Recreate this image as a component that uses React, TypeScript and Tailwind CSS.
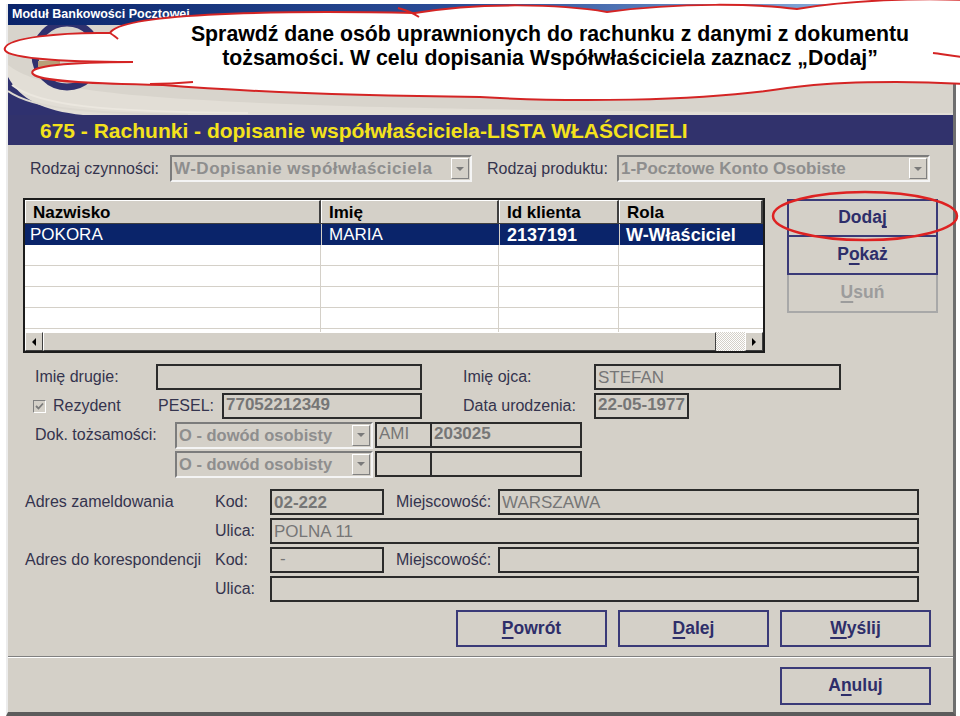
import React from "react";

const LBL = "text-[16px] text-[#34344e] whitespace-nowrap leading-none";

function Field({ className = "", children }: { className?: string; children?: React.ReactNode }) {
  return (
    <div
      className={`h-[26px] border-2 border-[#2b2b2b] bg-[#d4d0c8] pl-[2px] flex items-center text-[17px] leading-none text-[#767676] whitespace-nowrap overflow-hidden ${className}`}
    >
      {children}
    </div>
  );
}

function Select({ className = "", text, size = "text-[17px]" }: { className?: string; text: string; size?: string }) {
  return (
    <div
      className={`h-[27px] flex border-2 border-t-[#7c7c7c] border-l-[#7c7c7c] border-b-[#f4f4f4] border-r-[#f4f4f4] bg-[#d4d0c8] ${className}`}
    >
      <div className={`flex-1 flex items-center pl-[2px] font-bold text-[#8e8e8e] leading-none whitespace-nowrap overflow-hidden ${size}`}>
        {text}
      </div>
      <div className="w-[18px] my-[1px] mr-[1px] flex items-center justify-center border border-t-white border-l-white border-b-[#808080] border-r-[#808080] bg-[#d4d0c8]">
        <div className="w-0 h-0 border-x-[4px] border-x-transparent border-t-[4px] border-t-[#7a7a7a]" />
      </div>
    </div>
  );
}

function Btn({ children, className = "", disabled = false }: { children: React.ReactNode; className?: string; disabled?: boolean }) {
  return (
    <div
      className={`w-[151px] flex items-center justify-center font-bold text-[17.5px] leading-none ${
        disabled ? "border-2 border-[#a8a8a8] text-[#9c9c9c]" : "border-2 border-[#3a3a78] text-[#2e2e6a]"
      } ${className}`}
    >
      {children}
    </div>
  );
}

const U = ({ c }: { c: string }) => <span className="underline underline-offset-[3px] decoration-[1.5px]">{c}</span>;

function Table() {
  const cols = ["w-[296px]", "w-[178px]", "w-[120px]", "w-[144px]"];
  return (
    <div className="w-[742px] h-[155px] border-2 border-[#1c1c1c] bg-white flex flex-col">
      <div className="h-[24px] flex border-b border-b-[#404040]">
        {["Nazwisko", "Imię", "Id klienta", "Rola"].map((h, i) => (
          <div
            key={h}
            className={`${cols[i]} flex items-center pl-[7px] bg-[#d4d0c8] border-t border-l border-t-white border-l-white border-r-2 border-r-[#404040] font-bold text-[17px] leading-none text-black`}
          >
            {h}
          </div>
        ))}
      </div>
      <div className="h-[21px] flex bg-[#0a246a] text-white leading-none">
        <div className="w-[296px] flex items-center pl-[5px] text-[17px]">POKORA</div>
        <div className="w-[178px] flex items-center pl-[7px] text-[17px] border-l border-l-[#d4d0c8]">MARIA</div>
        <div className="w-[120px] flex items-center pl-[7px] text-[18px] font-bold border-l border-l-[#d4d0c8]">2137191</div>
        <div className="w-[144px] flex items-center pl-[6px] text-[18px] font-bold border-l border-l-[#d4d0c8]">W-Właściciel</div>
      </div>
      {[0, 1, 2, 3].map((r) => (
        <div key={r} className="h-[21px] flex border-b border-b-[#d4d0c8]">
          {cols.map((c, i) => (
            <div key={i} className={`${c} ${i < 3 ? "border-r border-r-[#d4d0c8]" : ""}`} />
          ))}
        </div>
      ))}
      <div className="flex-1 flex">
        {cols.map((c, i) => (
          <div key={i} className={`${c} ${i < 3 ? "border-r border-r-[#d4d0c8]" : ""}`} />
        ))}
      </div>
      <div className="h-[19px] flex bg-[#d4d0c8]">
        <div className="w-[18px] flex items-center justify-center border border-t-white border-l-white border-b-[#404040] border-r-[#404040]">
          <div className="w-0 h-0 border-y-[4px] border-y-transparent border-r-[4px] border-r-black" />
        </div>
        <div className="w-[673px] border border-t-white border-l-white border-b-[#404040] border-r-[#404040]" />
        <div className="w-[29px] bg-[repeating-conic-gradient(#ffffff_0_25%,#d4d0c8_0_50%)] bg-[length:2px_2px]" />
        <div className="w-[18px] flex items-center justify-center border border-t-white border-l-white border-b-[#404040] border-r-[#404040]">
          <div className="w-0 h-0 border-y-[4px] border-y-transparent border-l-[4px] border-l-black" />
        </div>
      </div>
    </div>
  );
}

export default function App() {
  return (
    <div className="relative w-[960px] h-[716px] overflow-hidden bg-white font-['Liberation_Sans',Arial,sans-serif]">
      <div className="ml-[6px] mt-[4px] w-[950px] h-[712px] flex flex-col border-l-2 border-l-[#ececec] border-r-[3px] border-r-[#6e6e6e] border-b-4 border-b-[#5c5c5c] bg-[#d4d0c8]">
        {/* title bar */}
        <div className="h-[21px] flex items-center pl-[4px] bg-gradient-to-r from-[#0a246a] via-[#2d4f9a] to-[#a6caf0] text-white font-bold text-[12.5px]">
          Moduł Bankowości Pocztowej
        </div>
        {/* header with logo */}
        <div className="h-[90px] bg-[#d8d4cc]">
          <svg width="945" height="90" viewBox="0 0 945 90">
            <path d="M0 40 C 40 70, 140 86, 945 88 L945 90 L0 90 Z" fill="#e2ded6" />
            <circle cx="59" cy="30" r="32" fill="none" stroke="#2f316f" strokeWidth="7" />
            <rect x="30" y="36" width="22" height="6" fill="#b8a078" />
            <path d="M0 52 C 12 74, 35 86, 75 90 L0 90 Z" fill="#2f316f" />
            <path d="M0 66 C 25 84, 80 88, 180 90" fill="none" stroke="#dcd8d0" strokeWidth="2" />
            <path d="M4 60 C 30 80, 90 87, 240 88" fill="none" stroke="#ebe7df" strokeWidth="2" />
          </svg>
        </div>
        {/* band */}
        <div className="h-[30px] flex items-center pl-[32px] bg-[#31326c] text-[#f4e21c] font-bold text-[21px] leading-none whitespace-nowrap">
          675 - Rachunki - dopisanie współwłaściciela-LISTA WŁAŚCICIELI
        </div>
        {/* content */}
        <div className="flex-1 flex flex-col">
          <div className="mt-[10px] h-[27px] flex items-center pl-[22px]">
            <div className={`w-[140px] ${LBL}`}>Rodzaj czynności:</div>
            <Select className="w-[302px]" size="text-[17px] tracking-[0.5px]" text="W-Dopisanie współwłaściciela" />
            <div className={`ml-[15px] w-[130px] ${LBL}`}>Rodzaj produktu:</div>
            <Select className="w-[313px]" text="1-Pocztowe Konto Osobiste" />
          </div>

          <div className="mt-[16px] flex pl-[15px]">
            <Table />
            <div className="ml-[22px] mt-[1px] flex flex-col">
              <Btn className="h-[38px]">
                Doda<U c="j" />
              </Btn>
              <Btn className="h-[38px] border-t-0">
                P<U c="o" />każ
              </Btn>
              <Btn className="h-[38px] border-t-0" disabled>
                <U c="U" />suń
              </Btn>
            </div>
          </div>

          <div className="mt-[11px] flex flex-col gap-[3px]">
            <div className="h-[26px] flex items-center pl-[27px]">
              <div className={`w-[121px] ${LBL}`}>Imię drugie:</div>
              <Field className="w-[266px]" />
              <div className={`ml-[41px] w-[131px] ${LBL}`}>Imię ojca:</div>
              <Field className="w-[247px]">STEFAN</Field>
            </div>
            <div className="h-[26px] flex items-center pl-[25px]">
              <div className="w-[125px] flex items-center">
                <div className="w-[13px] h-[13px] border border-t-[#808080] border-l-[#808080] border-b-white border-r-white bg-[#d4d0c8] flex items-center justify-center">
                  <svg width="9" height="9" viewBox="0 0 9 9">
                    <path d="M1 4 L3.5 6.5 L8 1.5" fill="none" stroke="#7a7a7a" strokeWidth="1.8" />
                  </svg>
                </div>
                <div className={`ml-[7px] ${LBL}`}>Rezydent</div>
              </div>
              <div className={`w-[64px] ${LBL}`}>PESEL:</div>
              <Field className="w-[200px] items-start pt-[1px] font-bold">77052212349</Field>
              <div className={`ml-[41px] w-[131px] ${LBL}`}>Data urodzenia:</div>
              <Field className="w-[95px] items-start pt-[1px] font-bold">22-05-1977</Field>
            </div>
            <div className="h-[26px] flex items-center pl-[27px]">
              <div className={`w-[140px] ${LBL}`}>Dok. tożsamości:</div>
              <Select className="w-[198px]" size="text-[16.5px]" text="O - dowód osobisty" />
              <Field className="w-[57px] ml-[2px] items-start pt-[1px]">AMI</Field>
              <Field className="w-[150px] border-l-0 items-start pt-[1px] font-bold">203025</Field>
            </div>
            <div className="h-[26px] flex items-center pl-[167px]">
              <Select className="w-[198px]" size="text-[16.5px]" text="O - dowód osobisty" />
              <Field className="w-[57px] ml-[2px]" />
              <Field className="w-[150px] border-l-0" />
            </div>
          </div>

          <div className="mt-[12px] flex flex-col gap-[3px]">
            <div className="h-[26px] flex items-center pl-[17px]">
              <div className={`w-[190px] ${LBL}`}>Adres zameldowania</div>
              <div className={`w-[55px] ${LBL}`}>Kod:</div>
              <Field className="w-[114px] font-bold">02-222</Field>
              <div className={`ml-[12px] w-[102px] ${LBL}`}>Miejscowość:</div>
              <Field className="w-[421px]">WARSZAWA</Field>
            </div>
            <div className="h-[26px] flex items-center pl-[207px]">
              <div className={`w-[55px] ${LBL}`}>Ulica:</div>
              <Field className="w-[649px]">POLNA 11</Field>
            </div>
            <div className="h-[26px] flex items-center pl-[17px]">
              <div className={`w-[190px] ${LBL}`}>Adres do korespondencji</div>
              <div className={`w-[55px] ${LBL}`}>Kod:</div>
              <Field className="w-[114px] pl-[8px] items-start pt-[1px]">-</Field>
              <div className={`ml-[12px] w-[102px] ${LBL}`}>Miejscowość:</div>
              <Field className="w-[421px]" />
            </div>
            <div className="h-[26px] flex items-center pl-[207px]">
              <div className={`w-[55px] ${LBL}`}>Ulica:</div>
              <Field className="w-[649px]" />
            </div>
          </div>

          <div className="mt-[8px] h-[37px] flex gap-[11px] pl-[448px]">
            <Btn>
              <U c="P" />owrót
            </Btn>
            <Btn>
              <U c="D" />alej
            </Btn>
            <Btn>
              <U c="W" />yślij
            </Btn>
          </div>

          <div className="mt-[9px] h-[2px] border-t border-t-[#808080] border-b border-b-white" />

          <div className="mt-[9px] h-[38px] flex pl-[772px]">
            <Btn>
              A<U c="n" />uluj
            </Btn>
          </div>
        </div>
      </div>

      {/* callout cloud and highlight */}
      <svg className="absolute left-0 top-0 pointer-events-none" width="960" height="716" viewBox="0 0 960 716">
        <path
          d="M110 33 C 120 14, 260 10, 415 13 C 480 2, 560 4, 607 12 C 680 2, 760 4, 797 9 C 850 0, 920 -2, 964 0 L 964 84 C 900 80, 830 82, 787 88 C 700 102, 560 102, 480 97 C 380 96, 250 92, 163 85 C 100 84, 40 82, 33 74 C 26 66, 70 62, 133 62 C 60 62, 0 58, 5 48 C 8 38, 60 32, 110 33 Z"
          fill="white"
          stroke="#d42424"
          strokeWidth="2"
        />
        <path d="M933 53 C 942 54, 950 56, 962 57" fill="none" stroke="#d42424" strokeWidth="2" />
        <path d="M398 8 C 406 10, 413 13, 419 17" fill="none" stroke="#d42424" strokeWidth="2" />
        <path d="M150 84 C 168 84, 182 83, 193 82" fill="none" stroke="#d42424" strokeWidth="2" />
        <path d="M110 33 C 113 35, 116 37, 118 39" fill="none" stroke="#d42424" strokeWidth="2" />
        <ellipse cx="865" cy="216" rx="92" ry="24" fill="none" stroke="#de2222" strokeWidth="2.5" />
      </svg>
      <div className="absolute left-[140px] top-[22px] w-[820px] text-center text-black font-bold text-[21.3px] leading-[24px]">
        Sprawdź dane osób uprawnionych do rachunku z danymi z dokumentu
        <br />
        tożsamości. W celu dopisania Współwłaściciela zaznacz „Dodaj”
      </div>
    </div>
  );
}
